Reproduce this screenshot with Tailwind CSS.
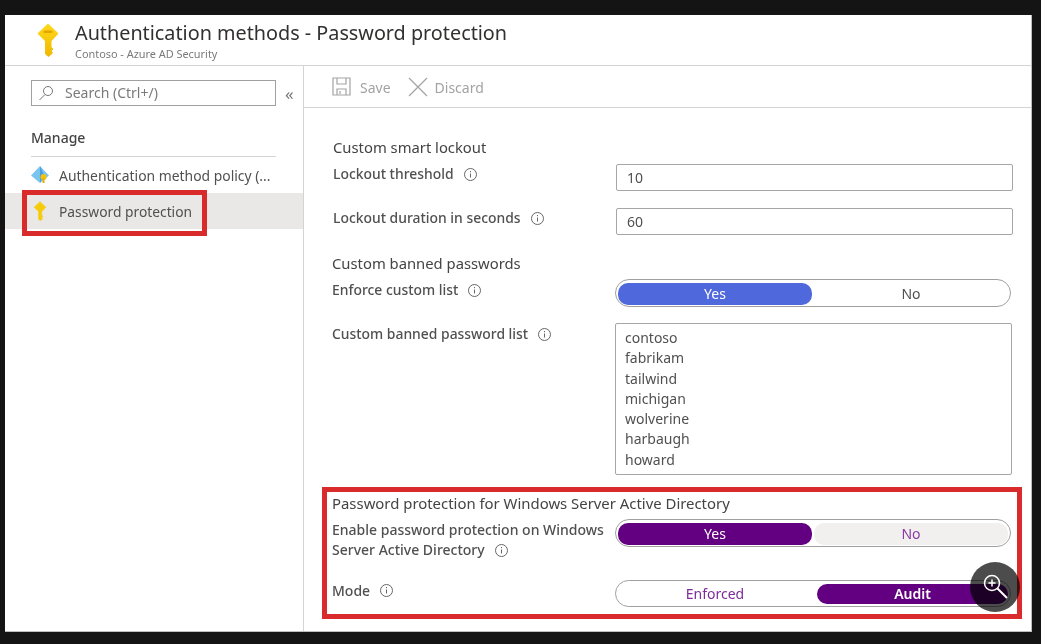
<!doctype html>
<html><head><meta charset="utf-8"><script src="https://cdn.jsdelivr.net/npm/@tailwindcss/browser@4"></script></head>
<body class="bg-[#141414] w-[1041px] h-[644px] overflow-hidden font-['Noto_Sans',sans-serif] text-[#505050]">
<div class="relative h-full pl-[5px] pr-[9px] pt-[15px] pb-[12px]">
<div class="bg-white h-[617px] border-r border-b border-[#bdbdbd] flex flex-col blur-[0.3px]">
  <header class="h-[51px] shrink-0 border-b border-[#d4d4d4] flex items-start pl-[31px]">
    <svg class="mt-[8px] w-[24px] h-[34px]" viewBox="0 0 24 34"><defs><linearGradient id="k" x1="0" y1="0" x2="0" y2="1"><stop offset="0" stop-color="#ffd91a"/><stop offset="1" stop-color="#efb800"/></linearGradient></defs><path d="M12 1 22 10.500 15 18V24.500L17 26 15 28 16.500 30 12.500 33.500 9.500 31V18L2 10.500Z" fill="url(#k)" stroke="url(#k)" stroke-linejoin="round"/><rect x="7.500" y="7.500" width="9" height="2.500" rx="1" fill="#e3a600"/></svg>
    <div class="ml-[15px] pt-[4px]">
      <div class="text-[19.800px] leading-[28px] text-[#323130] whitespace-nowrap">Authentication methods - Password protection</div>
      <div class="text-[10.900px] leading-[13px] text-[#7a7a7a] whitespace-nowrap">Contoso - Azure AD Security</div>
    </div>
  </header>
  <div class="flex flex-1 min-h-0">
    <aside class="relative w-[299px] shrink-0 border-r border-[#d4d4d4] pt-[14px]">
      <div class="flex items-center ml-[26px] gap-[9px]">
        <div class="w-[245px] h-[26px] border border-[#a0a0a0] flex items-center pl-[6px] pb-[2px] text-[14px] text-[#7a7a7a]">
          <svg class="w-[16px] h-[16px] mr-[11px] mt-[2px]" viewBox="0 0 16 16" fill="none" stroke="#777" stroke-width="1"><circle cx="10" cy="6" r="4.500"/><path d="M7 9.500 1.500 15"/></svg>Search (Ctrl+/)
        </div>
        <span class="text-[17px] leading-none text-[#777]">«</span>
      </div>
      <div class="ml-[26px] mt-[19px] text-[14px] leading-[25px] font-medium text-[#444]">Manage</div>
      <div class="ml-[26px] w-[245px] mt-[6px] border-t border-[#d4d4d4]"></div>
      <div class="h-[36px] flex items-center pl-[26px] pt-[2px] text-[13.900px] whitespace-nowrap">
        <svg class="w-[18px] h-[18px] mr-[10px] -mt-[2px]" viewBox="0 0 18 18"><path d="M9 0 18 9.500 9 17 0 9.500Z" fill="#7cc4f0"/><path d="M9 0 13 9 9 17Z" fill="#4a9fe0"/><circle cx="12.500" cy="11" r="3" fill="#f2c20c"/><path d="M11.500 12h2v5h-2Z" fill="#e6ad00"/></svg>
        <span class="w-[216px] overflow-hidden">Authentication method policy (...</span>
      </div>
      <div class="h-[36px] bg-[#e9e8e7] flex items-center pl-[28px] pt-[3px] text-[13.800px]">
        <svg class="w-[14px] h-[20px] mr-[12px] -mt-[3px]" viewBox="0 0 24 34"><path d="M12 1 22 10.500 15 18V24.500L17 26 15 28 16.500 30 12.500 33.500 9.500 31V18L2 10.500Z" fill="#f5cb0c" stroke="#f5cb0c" stroke-linejoin="round"/></svg>
        Password protection
      </div>
      <div class="absolute left-[17px] top-[124px] w-[185px] h-[46px] border-[5px] border-[#d92b2b]"></div>
    </aside>
    <main class="flex-1 min-w-0">
      <div class="h-[42px] border-b border-[#d4d4d4] flex items-center pl-[28px] pt-[2px] text-[14px] text-[#a3a3a3]">
        <svg class="w-[19px] h-[19px] mr-[9px] -mt-[2px]" viewBox="0 0 19 19" fill="none" stroke="#a3a3a3" stroke-width="1.200"><path d="M1 1h17v17H1ZM5 1v6h9V1M5 18v-6h9v6M8 14v3"/></svg>
        <span>Save</span>
        <svg class="w-[20px] h-[20px] ml-[17px] mr-[7px] -mt-[2px]" viewBox="0 0 20 20" stroke="#a3a3a3" stroke-width="1.200"><path d="M1 1 19 19M19 1 1 19"/></svg>
        <span>Discard</span>
      </div>
      <div class="pl-[28px] pt-[29px] text-[14px]">
        <h3 class="h-[20px] leading-[20px] text-[14.800px] text-[#444] ml-px">Custom smart lockout</h3>
        <div class="grid grid-cols-[284px_397px] h-[27px] mt-[7px]">
          <div class="flex items-center ml-px h-[20px] font-medium text-[13.900px]">Lockout threshold<svg class="w-[13px] h-[13px] ml-[10px]" viewBox="0 0 13 13" fill="none" stroke="#666"><circle cx="6.500" cy="6.500" r="6"/><path d="M6.500 5.500v4M6.500 3v1.200"/></svg></div>
          <div class="h-[27px] border border-[#a6a6a6] rounded-[2px] pl-[10px] leading-[26px]">10</div>
        </div>
        <div class="grid grid-cols-[284px_397px] h-[27px] mt-[17px]">
          <div class="flex items-center ml-px h-[20px] font-medium text-[13.900px]">Lockout duration in seconds<svg class="w-[13px] h-[13px] ml-[10px]" viewBox="0 0 13 13" fill="none" stroke="#666"><circle cx="6.500" cy="6.500" r="6"/><path d="M6.500 5.500v4M6.500 3v1.200"/></svg></div>
          <div class="h-[27px] border border-[#a6a6a6] rounded-[2px] pl-[10px] leading-[26px]">60</div>
        </div>
        <h3 class="h-[20px] leading-[20px] text-[14.800px] text-[#444] mt-[18px]">Custom banned passwords</h3>
        <div class="grid grid-cols-[283px_396px] h-[28px] mt-[6px]">
          <div class="flex items-center h-[22px] font-medium text-[13.900px]">Enforce custom list<svg class="w-[13px] h-[13px] ml-[10px]" viewBox="0 0 13 13" fill="none" stroke="#666"><circle cx="6.500" cy="6.500" r="6"/><path d="M6.500 5.500v4M6.500 3v1.200"/></svg></div>
          <div class="h-[28px] border border-[#a0a0a0] rounded-full px-[2px] py-[3px] grid grid-cols-2 gap-[2px] text-center leading-[22px]">
            <div class="bg-[#4f69dc] text-white rounded-[10px]">Yes</div><div>No</div>
          </div>
        </div>
        <div class="grid grid-cols-[283px_397px] h-[152px] mt-[16px]">
          <div class="flex items-center h-[22px] font-medium text-[13.900px]">Custom banned password list<svg class="w-[13px] h-[13px] ml-[10px]" viewBox="0 0 13 13" fill="none" stroke="#666"><circle cx="6.500" cy="6.500" r="6"/><path d="M6.500 5.500v4M6.500 3v1.200"/></svg></div>
          <div class="h-[152px] border border-[#a6a6a6] rounded-[2px] pl-[9px] pt-[4px] leading-[20.300px]"><div>contoso</div><div>fabrikam</div><div>tailwind</div><div>michigan</div><div>wolverine</div><div>harbaugh</div><div>howard</div></div>
        </div>
        <section class="-ml-[10px] mt-[12px] w-[700px] h-[132px] border-[5px] border-[#d92b2b] pl-[5px] pt-[1px]">
          <h3 class="h-[20px] leading-[20px] text-[14.900px] text-[#444] whitespace-nowrap">Password protection for Windows Server Active Directory</h3>
          <div class="grid grid-cols-[283px_396px] h-[28px] mt-[6px]">
            <div class="font-medium leading-[20px] pt-[1px] w-[280px]">Enable password protection on Windows <span class="inline-flex items-center">Server Active Directory<svg class="w-[13px] h-[13px] ml-[10px]" viewBox="0 0 13 13" fill="none" stroke="#666"><circle cx="6.500" cy="6.500" r="6"/><path d="M6.500 5.500v4M6.500 3v1.200"/></svg></span></div>
            <div class="h-[28px] border border-[#a0a0a0] rounded-full px-[2px] py-[3px] grid grid-cols-2 gap-[2px] text-center leading-[22px]">
              <div class="bg-[#620081] text-white rounded-[10px]">Yes</div><div class="bg-[#f1f0ef] text-[#8a3aa3] rounded-[10px]">No</div>
            </div>
          </div>
          <div class="grid grid-cols-[283px_396px] h-[27px] mt-[33px]">
            <div class="flex items-center h-[21px] font-medium">Mode<svg class="w-[13px] h-[13px] ml-[10px]" viewBox="0 0 13 13" fill="none" stroke="#666"><circle cx="6.500" cy="6.500" r="6"/><path d="M6.500 5.500v4M6.500 3v1.200"/></svg></div>
            <div class="h-[27px] border border-[#a0a0a0] rounded-full px-[2px] py-[3px] grid grid-cols-2 gap-[2px] text-center leading-[20px]">
              <div class="text-[#7f2a9b]">Enforced</div><div class="bg-[#620081] text-white font-semibold rounded-[10px] ml-[3px]">Audit</div>
            </div>
          </div>
        </section>
      </div>
    </main>
  </div>
</div>
<div class="absolute left-[970px] top-[562px] w-[50px] h-[50px] rounded-full bg-black/70 flex items-center justify-center">
  <svg class="w-[28px] h-[28px]" viewBox="0 0 28 28" fill="none" stroke="#fff" stroke-width="1.500"><circle cx="11" cy="10" r="7.500"/><path d="M11 6.500v7M7.500 10h7"/><path d="M16.500 15.500 26 25" stroke-width="2"/></svg>
</div>
</div>
</body></html>
